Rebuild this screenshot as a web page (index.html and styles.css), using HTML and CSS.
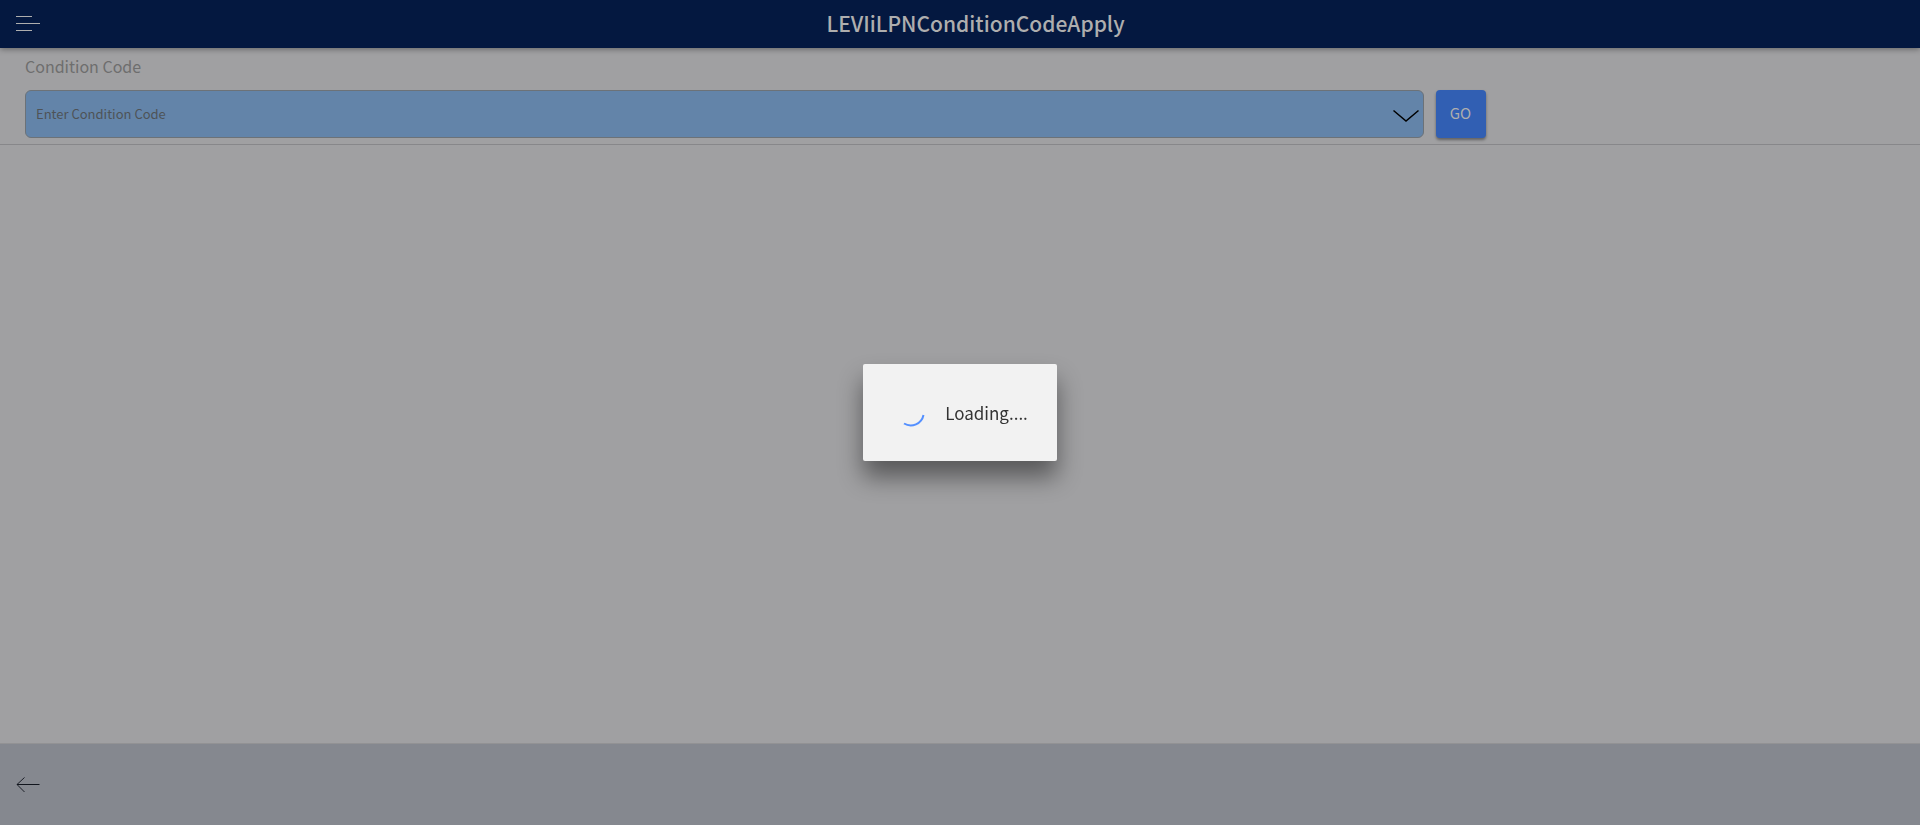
FILE: index.html
```html
<!DOCTYPE html>
<html lang="en">
<head>
<meta charset="utf-8">
<title>LEVIiLPNConditionCodeApply</title>
<link rel="stylesheet" href="styles.css">
</head>
<body>
<header class="toolbar">
  <button class="icon-button" type="button" aria-label="Menu">
    <svg class="menu-icon" viewBox="0 0 24 16" aria-hidden="true"><path d="M0 .5h16M0 7.5h24M0 14.5h16"/></svg>
  </button>
  <h1 class="title">LEVIiLPNConditionCodeApply</h1>
</header>
<main class="content">
  <form class="condition-form">
    <label class="label" for="code">Condition Code</label>
    <div class="row">
      <div class="field">
        <input class="code-input" id="code" type="text" placeholder="Enter Condition Code">
        <button class="open-list" type="button" aria-label="Show condition codes">
          <svg class="chevron-icon" viewBox="0 0 26 13" aria-hidden="true"><path d="M.5 1 13 11.5 25.500 1"/></svg>
        </button>
      </div>
      <button class="go" type="button">GO</button>
    </div>
  </form>
</main>
<footer class="footer">
  <button class="icon-button" type="button" aria-label="Back">
    <svg class="back-icon" viewBox="0 0 24 16" aria-hidden="true"><path class="head" d="M8.500 .5 1 7.500l7.500 7.500"/><path d="M1 7.500h22.500"/></svg>
  </button>
</footer>
<div class="overlay">
  <div class="loading" role="alertdialog" aria-label="Loading">
    <svg class="spinner" viewBox="0 0 28 28" aria-hidden="true"><path d="M7 24.500A13 13 0 0 0 26.500 16"/></svg>
    <span>Loading....</span>
  </div>
</div>
</body>
</html>
```
FILE: styles.css
```css
* { box-sizing: border-box; }
body {
  display: flex;
  flex-direction: column;
  min-height: 100vh;
  margin: 0;
  background: #a0a0a2;
  font-family: "Noto Sans CJK SC", "Noto Sans", sans-serif;
}
button {
  padding: 0;
  border: 0;
  background: none;
  font-family: inherit;
}
svg {
  display: block;
  fill: none;
}
.toolbar {
  display: flex;
  align-items: center;
  height: 48px;
  padding: 0 16px;
  background: #041840;
  box-shadow: 0 1px 6px rgba(0, 0, 0, .4);
}
.menu-icon {
  width: 24px;
  height: 16px;
  stroke: #aeaeae;
}
.title {
  flex: 1;
  margin: 0;
  padding: 0 0 2px 7px;
  color: #aeaeae;
  font-size: 21px;
  font-weight: 500;
  line-height: 32px;
  text-align: center;
}
.content { flex: 1; }
.condition-form {
  padding: 5px 0 6px 25px;
  border-bottom: 1px solid #87878a;
}
.label {
  display: block;
  margin-bottom: 11px;
  color: #6e6e6e;
  font-size: 16px;
  line-height: 26px;
}
.row {
  display: flex;
  gap: 12px;
}
.field {
  position: relative;
  width: 73.8%;
}
.code-input {
  display: block;
  width: 100%;
  height: 48px;
  padding: 0 40px 2px 10px;
  border: 1px solid #6c7278;
  border-radius: 6px;
  background: #6384a9;
  color: #222;
  font-family: inherit;
  font-size: 13px;
}
.code-input::placeholder {
  color: #4e5357;
  opacity: 1;
}
.open-list {
  position: absolute;
  top: 18px;
  right: 5px;
}
.chevron-icon {
  width: 26px;
  height: 16px;
  stroke: #000;
  stroke-width: 1.500;
}
.go {
  width: 50px;
  height: 48px;
  padding-bottom: 3px;
  border-radius: 4px;
  background: #315fb3;
  box-shadow: 0 2px 3px rgba(0, 0, 0, .4);
  color: #aeaeae;
  font-size: 15px;
}
.footer {
  display: flex;
  align-items: center;
  height: 82px;
  padding: 0 16px;
  border-top: 1px solid #929294;
  background: #85888f;
}
.back-icon {
  width: 24px;
  height: 16px;
  stroke: #11151d;
}
.head { stroke-width: .9; }
.overlay {
  position: fixed;
  inset: 0;
  display: flex;
  align-items: center;
  justify-content: center;
}
.loading {
  display: flex;
  align-items: center;
  gap: 20px;
  height: 97px;
  padding: 0 29px 0 34px;
  border-radius: 2px;
  background: #f2f2f2;
  box-shadow: 0 16px 24px rgba(0, 0, 0, .45);
  color: #333;
  font-size: 17px;
}
.spinner {
  width: 28px;
  height: 28px;
  stroke: #5490ff;
  stroke-width: 2;
}
```
